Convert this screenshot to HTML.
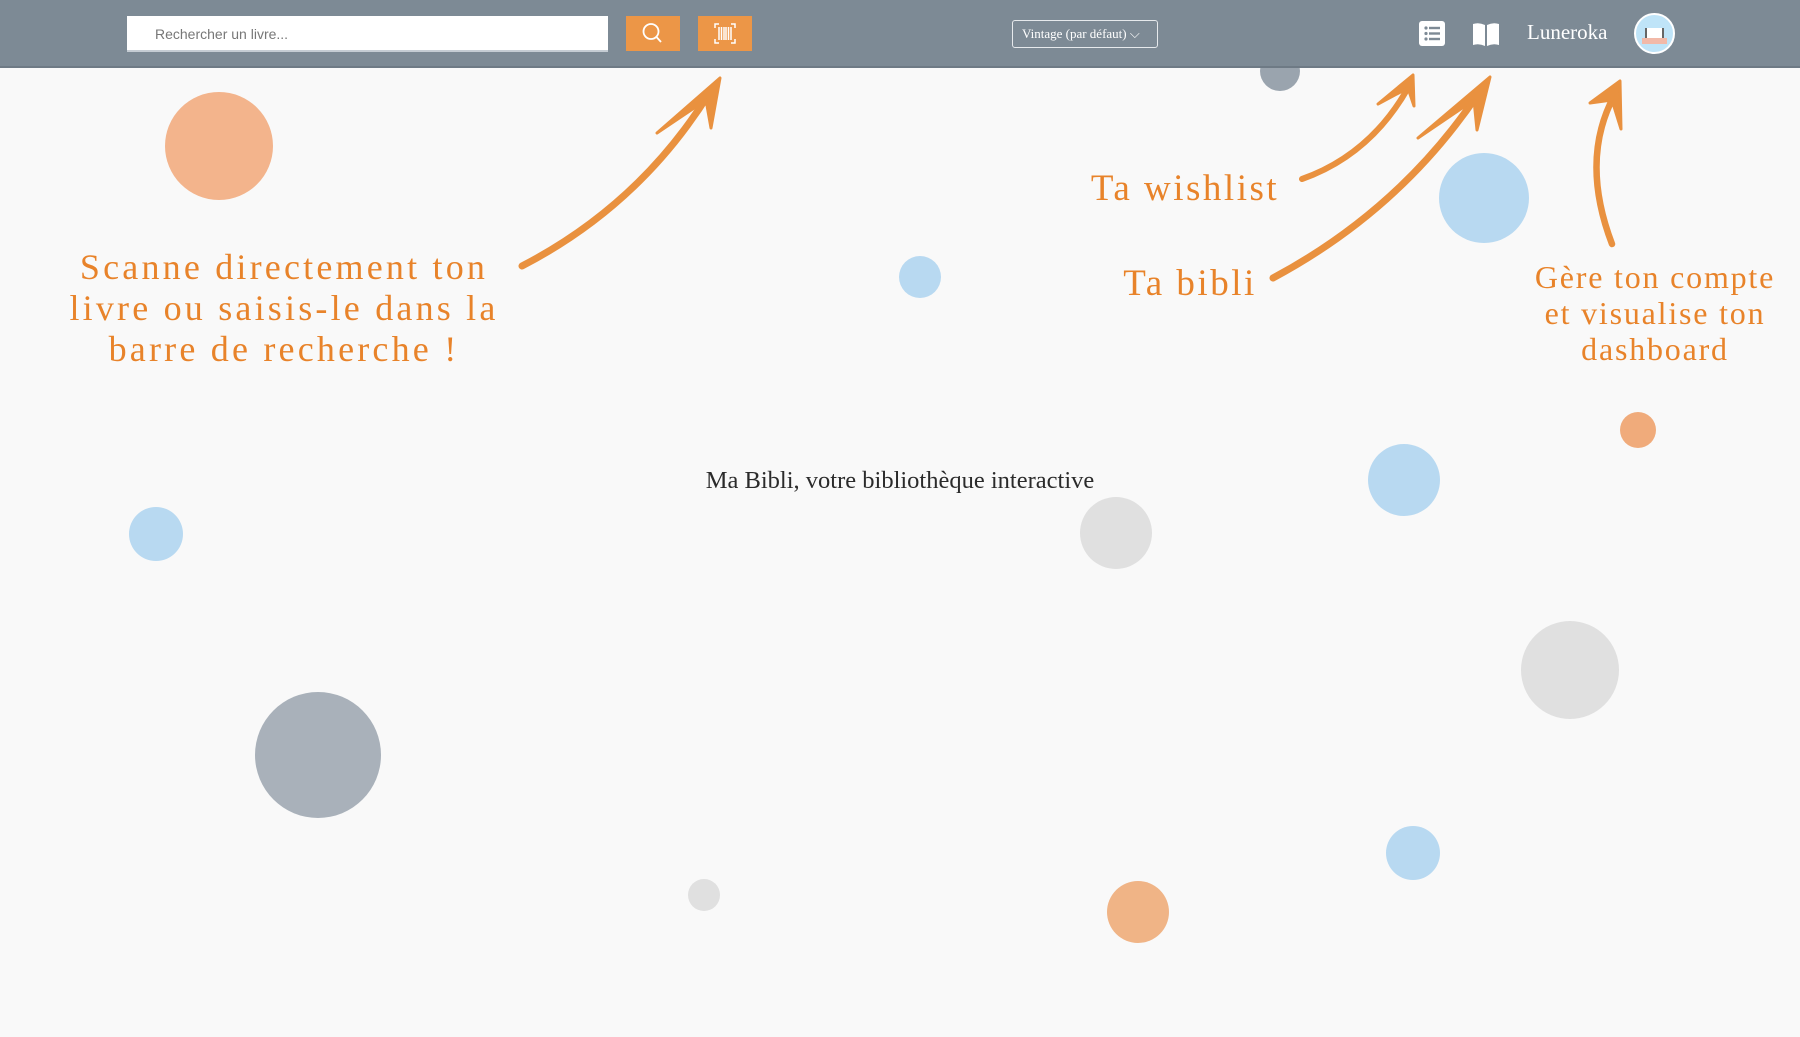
<!DOCTYPE html>
<html><head><meta charset="utf-8"><style>
*{margin:0;padding:0;box-sizing:border-box}
body{width:1800px;height:1037px;background:#f9f9f9;position:relative;overflow:hidden;font-family:"Liberation Serif",serif}
.hdr{position:absolute;left:0;top:0;width:1800px;height:68px;background:#7d8a95;border-bottom:2px solid #6e7a85;z-index:3}
.c{position:absolute;border-radius:50%}
.o{background:#f2b086;opacity:.95}
.b{background:#b8d9f1}
.g{background:#e0e0e0}
.d{background:#a9b1ba}
.t{position:absolute;color:#e8832a;text-align:center;font-family:"Liberation Serif",serif;letter-spacing:3.2px}
</style></head><body>
<div class="c o" style="left:165px;top:92px;width:108px;height:108px"></div>
<div class="c d" style="left:1260px;top:51px;width:40px;height:40px;background:#9aa4ae"></div>
<div class="c b" style="left:899px;top:256px;width:42px;height:42px"></div>
<div class="c b" style="left:1439px;top:153px;width:90px;height:90px"></div>
<div class="c o" style="left:1620px;top:412px;width:36px;height:36px;background:#efa774"></div>
<div class="c b" style="left:1368px;top:444px;width:72px;height:72px"></div>
<div class="c g" style="left:1080px;top:497px;width:72px;height:72px"></div>
<div class="c b" style="left:129px;top:507px;width:54px;height:54px"></div>
<div class="c g" style="left:1521px;top:621px;width:98px;height:98px"></div>
<div class="c d" style="left:255px;top:692px;width:126px;height:126px"></div>
<div class="c b" style="left:1386px;top:826px;width:54px;height:54px"></div>
<div class="c g" style="left:688px;top:879px;width:32px;height:32px"></div>
<div class="c o" style="left:1107px;top:881px;width:62px;height:62px;background:#efb07f"></div>

<div class="hdr">
 <div style="position:absolute;left:127px;top:16px;width:481px;height:36px;background:#fff;border-bottom:2px solid #c5ccd3;font-family:'Liberation Sans',sans-serif;font-size:14px;color:#777;padding:10px 0 0 28px">Rechercher un livre...</div>
 <div style="position:absolute;left:626px;top:16px;width:54px;height:35px;background:#ec9647">
  <svg width="54" height="35" viewBox="0 0 54 35"><circle cx="25" cy="15.5" r="7.5" fill="none" stroke="#fff" stroke-width="1.8"/><line x1="30.5" y1="21" x2="35" y2="26" stroke="#fff" stroke-width="1.8"/></svg></div>
 <div style="position:absolute;left:698px;top:16px;width:54px;height:35px;background:#ec9647">
  <svg width="54" height="35" viewBox="0 0 54 35" fill="none" stroke="#fff" stroke-width="1.5"><path d="M17 12v-4h4M33 8h4v4M37 23v4h-4M21 27h-4v-4"/><path d="M21 11v13M23.5 11v13M26 11v13M28 11v13M30.5 11v13M33 11v13"/></svg></div>
 <div style="position:absolute;left:1012px;top:20px;width:146px;height:28px;border:1.5px solid #e6e9ec;border-radius:3px;color:#fff;font-size:13px;padding:5px 0 0 9px">Vintage (par défaut) ⌵</div>
 <svg style="position:absolute;left:1419px;top:21px" width="26" height="25" viewBox="0 0 26 25"><rect width="26" height="25" rx="3" fill="#fff"/><g fill="#7d8a95"><circle cx="7" cy="7" r="1.6"/><circle cx="7" cy="12.5" r="1.6"/><circle cx="7" cy="18" r="1.6"/><rect x="10" y="5.8" width="11" height="2.4"/><rect x="10" y="11.3" width="11" height="2.4"/><rect x="10" y="16.8" width="11" height="2.4"/></g></svg>
 <svg style="position:absolute;left:1472px;top:21px" width="28" height="26" viewBox="0 0 28 26"><path d="M1 3q6-2 12 1v21q-6-3-12-1z M27 3q-6-2-12 1v21q6-3 12-1z" fill="#fff"/></svg>
 <div style="position:absolute;left:1527px;top:20px;color:#fff;font-size:21px">Luneroka</div>
 <div style="position:absolute;left:1634px;top:13px;width:41px;height:41px;border-radius:50%;background:#bfe4f8;border:2px solid #fff;overflow:hidden">
  <div style="position:absolute;left:9px;top:13px;width:19px;height:14px;background:#fff;border:2px solid #666;border-top:none"></div>
  <div style="position:absolute;left:6px;top:23px;width:25px;height:6px;background:#f2b9a8"></div></div>
</div>

<div class="t" style="left:30px;top:247px;width:508px;font-size:36px;line-height:41px">Scanne directement ton<br>livre ou saisis-le dans la<br>barre de recherche !</div>
<div class="t" style="left:1080px;top:167px;width:210px;font-size:37px;letter-spacing:2.5px">Ta wishlist</div>
<div class="t" style="left:1110px;top:262px;width:160px;font-size:37px;letter-spacing:2.5px">Ta bibli</div>
<div class="t" style="left:1515px;top:259px;width:280px;font-size:32px;line-height:36px;letter-spacing:1.8px">Gère ton compte<br>et visualise ton<br>dashboard</div>

<div style="position:absolute;left:0;top:467px;width:1800px;text-align:center;font-size:24.5px;color:#2b2b2b">Ma Bibli, votre bibliothèque interactive</div>

<svg style="position:absolute;left:0;top:0" width="1800" height="1037" fill="none" stroke="#e9913f" stroke-linecap="round" stroke-linejoin="round">
 <path d="M522 266 Q640 205 710 92" stroke-width="7"/>
 <path d="M657 133 L720 78 L711 128 L706 100 Z" fill="#e9913f" stroke-width="3"/>
 <path d="M1302 179 Q1370 155 1408 88" stroke-width="6"/>
 <path d="M1378 104 L1413 75 L1414 106 L1408 88 Z" fill="#e9913f" stroke-width="3"/>
 <path d="M1273 278 Q1400 210 1478 94" stroke-width="7"/>
 <path d="M1418 138 L1490 77 L1477 130 L1474 100 Z" fill="#e9913f" stroke-width="3"/>
 <path d="M1612 244 Q1580 160 1614 96" stroke-width="6.5"/>
 <path d="M1590 103 L1620 81 L1621 129 L1612 100 Z" fill="#e9913f" stroke-width="3"/>
</svg>
</body></html>
